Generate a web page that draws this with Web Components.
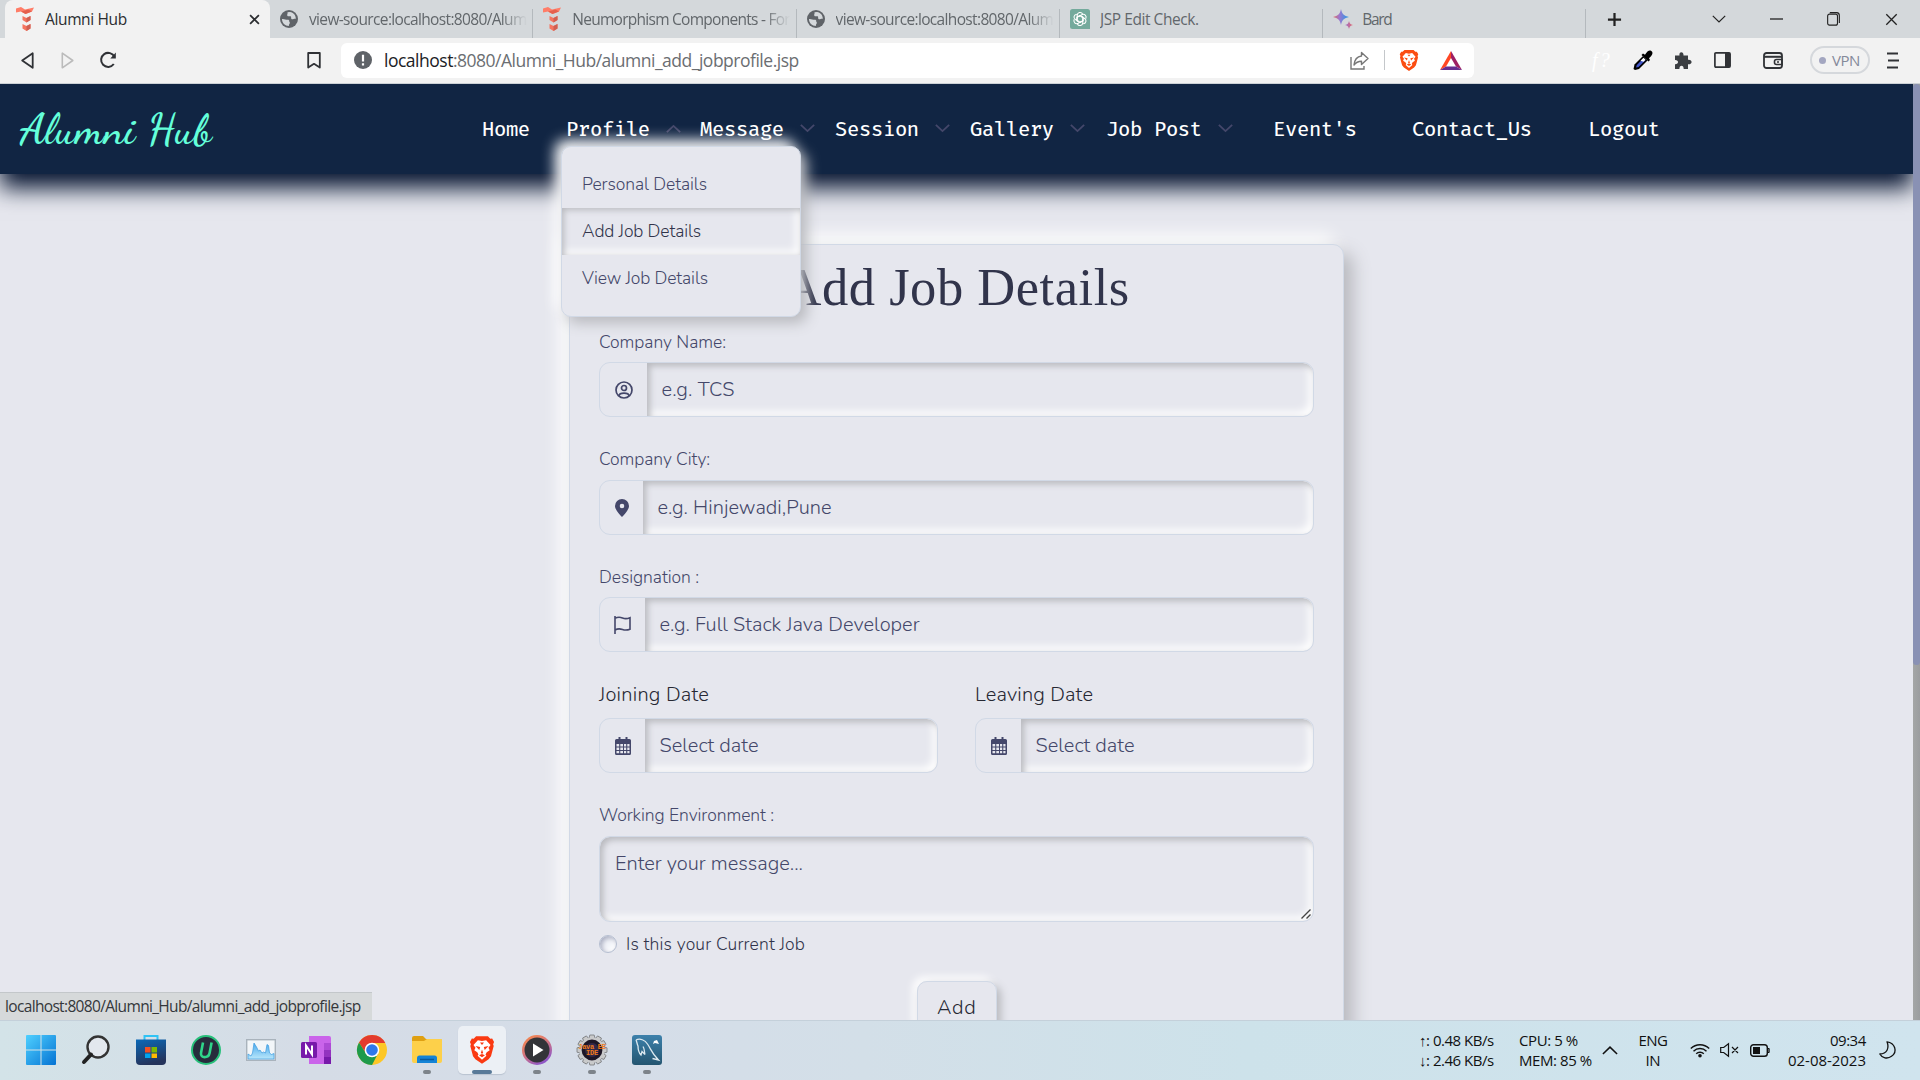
<!DOCTYPE html>
<html lang="en"><head><meta charset="utf-8"><title>Alumni Hub</title>
<style>html,body{margin:0;height:100%;overflow:hidden;background:#e6e7ee}</style></head>
<body><desktop-screen></desktop-screen>
<script>
const define=(name,css,html,init)=>{
  const t=document.createElement('template');
  customElements.define(name,class extends HTMLElement{
    connectedCallback(){
      if(this.shadowRoot)return;
      t.innerHTML='<style>*{box-sizing:border-box}'+css+'</style>'+(typeof html==='function'?html(this):html);
      this.attachShadow({mode:'open'}).append(t.content.cloneNode(true));
      if(init)init(this);
    }
  });
};

/* Single line of text spread to the width given in "w". */
define('fit-text',':host{display:inline-block;white-space:pre;flex:none}','<slot></slot>',el=>{
  const w=+el.getAttribute('w');if(!w)return;
  const n=el.textContent.length,nat=el.getBoundingClientRect().width;
  if(nat)el.style.letterSpacing=((w-nat)/(n-0.5)).toFixed(3)+'px';
  el.style.width=w+'px';
});

const lion='<path d="M7 1h10l2 2.2 1.6-.2L22.200 6l-.8 2 .5 1.500-2.300 9-2 2.500L12 25l-5.600-4-2-2.500-2.300-9L2.600 8l-.8-2L3.400 3 5 3.200z" fill="BG"/><path d="M8.500 4.500 12 5.300l3.500-.8 3.700 4.200-1.700 2.300 1 2.200-2.500 1.800-1 1.800.7 1.200L12 21.500 8.300 18l.7-1.200-1-1.800-2.500-1.800 1-2.200-1.700-2.300z" fill="#fff"/><path d="M6.500 9.500l4 1-.8 2.500zM17.500 9.500l-4 1 .8 2.500zM12 12.500l1 3-1 .8-1-.8zM9.500 17.500l2.500-1 2.500 1-2.500 1.700z" fill="BG"/><path d="M10.300 6.600h3.400l-1.700 2z" fill="BG"/>';
const S='fill="none" stroke="currentColor"';
const knot='<path d="M7.200 9.800V6.300a2.900 2.900 0 0 1 5.400-1.400M7.200 8.300l3-1.700 3 1.700" transform="rotate(A 10 10)"/>';
const teeth=Array.from({length:12},(_,i)=>`<path d="M12.800 0h4.400l.8 4h-6z" transform="rotate(${i*30} 15 15)"/>`).join('');
const icons={
 neu:['0 0 18 24','<path d="M0 1.500 5 0l4 2.500L18 .5l-2 4L9.500 7 5 4.500 0 5.500z" fill="#ff7d68"/><path d="M5 4.500 9.500 7l6.500-2.500-3.500-2z" fill="#e5604e"/><path d="M6.500 9l4 2 4-2v4l-4 2.500-4-2.500z" fill="#f57560"/><path d="M10.500 11l4-2v4l-4 2.500z" fill="#cf5f52"/><path d="M6.500 17l4 2 4-2v4.500L10.500 24l-4-2.500z" fill="#f57560"/><path d="M10.500 19l4-2v4.500L10.500 24z" fill="#cf5f52"/>'],
 globe:['0 0 18 18','<circle cx="9" cy="9" r="9" fill="#5f6368"/><path d="M2 9c2-.5 4 1 6.500.7 1.500.8 0 2.300 1.500 3-.6 1.500-1.500 2-1 3.300C5 16 2 13 2 9zM7.500 2.200C8 4 6.500 4.500 7.500 6c1 .8 2.500-.3 3.500.5.5 1-.5 2 .8 2.700 1.300.3 2.200-.7 4-.4C16 5.500 13.500 2.500 10 2z" fill="#d4d8db"/>'],
 gpt:['0 0 20 20','<path d="M2.500 0h15Q20 0 20 2.500V20H2.500Q0 20 0 17.500v-15Q0 0 2.500 0z" fill="#74aa9c"/><g fill="none" stroke="#fff" stroke-width="1.100">'+[0,60,120,180,240,300].map(a=>knot.replace('A',a)).join('')+'</g>'],
 bard:['0 0 20 20','<defs><linearGradient id="b" x1="0" x2="1"><stop offset="0" stop-color="#e4685f"/><stop offset=".4" stop-color="#9a78d0"/><stop offset="1" stop-color="#1f9be8"/></linearGradient><linearGradient id="c"><stop offset="0" stop-color="#9a70d0"/><stop offset="1" stop-color="#e66a6a"/></linearGradient></defs><path d="M8 0c1 5 3 7 8 8-5 1-7 3-8 8-1-5-3-7-8-8 5-1 7-3 8-8z" fill="url(#b)"/><path d="M16 12c.5 2.500 1.500 3.500 4 4-2.500.5-3.500 1.500-4 4-.5-2.500-1.500-3.500-4-4 2.500-.5 3.500-1.500 4-4z" fill="url(#c)"/>'],
 x:['0 0 12 12','<path d="M1.200 1.200l9.600 9.600M10.800 1.200L1.200 10.800" '+S+' stroke-width="var(--sw,1.900)"/>'],
 plus:['0 0 16 16','<path d="M8 1v14M1 8h14" '+S+' stroke-width="2.400"/>'],
 chev:['0 0 14 8','<path d="M.8.8L7 7 13.200.8" '+S+' stroke-width="var(--sw,1.200)"/>'],
 chevup:['0 0 14 8','<path d="M.8 7.200L7 1l6.200 6.200" '+S+' stroke-width="var(--sw,1.200)"/>'],
 min:['0 0 14 14','<path d="M0 7h14" '+S+' stroke-width="1.300"/>'],
 max:['0 0 14 14','<rect x=".7" y="2.200" width="10.600" height="11" rx="2" '+S+' stroke-width="1.200"/><path d="M3 .7h7.500a3 3 0 0 1 2.800 3V11" '+S+' stroke-width="1.200"/>'],
 back:['0 0 13 17','<path d="M11.700 1.200v14.600L1.200 8.500z" '+S+' stroke-width="1.800" stroke-linejoin="round"/>'],
 fwd:['0 0 13 17','<path d="M1.300 1.200v14.600l10.500-7.300z" '+S+' stroke-width="1.600" stroke-linejoin="round"/>'],
 reload:['0 0 18 18','<path d="M14.800 13A7 7 0 1 1 15.500 6" '+S+' stroke-width="2"/><path d="M16.800 1.500v6h-5.500z" fill="currentColor"/>'],
 mark:['0 0 14 17','<path d="M1.200 1h11.600v14.500L7 11.800l-5.800 3.700z" '+S+' stroke-width="1.800" stroke-linejoin="round"/>'],
 info:['0 0 18 18','<circle cx="9" cy="9" r="9" fill="#5f6368"/><path d="M9 3.800v6.700M9 12.200v2.200" stroke="#fff" stroke-width="2.200"/>'],
 share:['0 0 19 19','<path d="M1 6v12h13v-3" '+S+' stroke-width="1.400"/><path d="M11.500 1.500l6.500 6-6.500 6v-3.300c-3.500 0-5.500 1-7.500 3.800.5-5 3.500-8.500 7.500-9z" '+S+' stroke-width="1.400" stroke-linejoin="round"/>'],
 lion:['1 0 22 26',lion.replaceAll('BG','#fb4d12')],
 redlion:['1 0 22 26',lion.replaceAll('BG','#fa3a12')],
 bat:['0 0 22 19','<path d="M11 0 0 19l6-3.500 5-8.500z" fill="#ff4724"/><path d="M11 0l11 19-6-3.500L11 7z" fill="#9e1f63"/><path d="M0 19h22l-6-3.500H6z" fill="#662d91"/>'],
 dropper:['0 0 20 21','<path d="M2 20l-1.500-1 1-4.500L10 6l4.500 4.500-8.500 8.500z" fill="#000"/><path d="M3 17.500l.8-2.500L10.500 8.300l2 2L5.500 17z" fill="#4356c8"/><path d="M7.500 10.800l3-3 2 2-2 2z" fill="#fff"/><path d="M8.500 5L10 3.500l2 1.300C14 1.500 16 0 18 .8c2 1 2 3.200 0 5.400l-2 2 1 1.700-1.500 1.500z" fill="#000"/>'],
 puzzle:['0 0 18 18','<path d="M1 4.500h4.500C4.500 0 10 0 9.500 4.500H14v4.200c4.800-.6 4.800 5.100 0 4.500V18H9.700c.3-4.500-4.600-4.500-4.300 0H1v-4.700c4 .2 4-4.400 0-4.200z" fill="#3b3e42"/>'],
 side:['0 0 17 16','<rect x=".9" y=".9" width="15.200" height="14.200" rx="1" '+S+' stroke-width="1.700"/><path d="M11 1h5v14h-5z" fill="currentColor"/>'],
 wallet:['0 0 20 17','<rect x="1" y="1" width="18" height="15" rx="2.500" '+S+' stroke-width="1.800"/><path d="M1 4.800h18" '+S+' stroke-width="2"/><path d="M19 7.500h-5.500a2 2 0 0 0-2 2v1a2 2 0 0 0 2 2H19z" '+S+' stroke-width="1.600"/><circle cx="15" cy="10" r="1" fill="currentColor"/>'],
 menu:['0 0 12 17','<path d="M0 1.500h11M1 8.500h11M0 15.500h11" '+S+' stroke-width="2"/>'],
 user:['0 0 18 18','<circle cx="9" cy="9" r="8" '+S+' stroke-width="1.700"/><circle cx="9" cy="7" r="2.500" '+S+' stroke-width="1.700"/><path d="M3.800 15c.4-2 2-2.800 5.200-2.800s4.800.8 5.200 2.800" '+S+' stroke-width="1.700"/>'],
 pin:['0 0 14 18','<path fill-rule="evenodd" d="M7 0a7 7 0 0 1 7 7c0 3.500-4.500 8.500-7 11C4.500 15.500 0 10.500 0 7a7 7 0 0 1 7-7zm0 4.700a2.300 2.300 0 1 0 0 4.600 2.300 2.300 0 0 0 0-4.600z" fill="currentColor"/>'],
 flag:['0 0 17 18','<path d="M1 0v18M1 2.400C3.500 1 5.500.8 8.500 2c2.800 1.100 4.500 1 7.500-.3v11.500c-3 1.200-4.700 1.300-7.500.3-3-1.100-5-.9-7.500.5" '+S+' stroke-width="1.600"/>'],
 cal:['0 0 16 18','<path d="M3.500 0h2v2h5V0h2v2H14.500q1.500 0 1.500 1.500v13q0 1.500-1.500 1.500h-13Q0 18 0 16.500v-13Q0 2 1.500 2h2z" fill="currentColor"/><path d="M1.500 7h2.700v2.400H1.500zM5.300 7H8v2.400H5.300zM9 7h2.200v2.400H9zM12.300 7h2.200v2.400h-2.200zM1.500 10.500h2.700v2.400H1.500zM5.300 10.500H8v2.400H5.300zM9 10.500h2.200v2.400H9zM12.300 10.500h2.200v2.400h-2.200zM1.500 14h2.700v2.300H1.500zM5.300 14H8v2.300H5.300zM9 14h2.200v2.300H9zM12.300 14h2.200v2.300h-2.200z" fill="#e6e7ee"/>'],
 grip:['0 0 10 10','<path d="M.5 9.500l9-9M5.500 9.500l4-4" stroke="#444" stroke-width="1.400"/>'],
 win:['0 0 30 30','<defs><linearGradient id="w" x2="1" y2="1"><stop offset="0" stop-color="#4fd0ff"/><stop offset="1" stop-color="#0573d3"/></linearGradient></defs><path d="M0 1q0-1 1-1h13.500v14.500H0zM15.500 0H29q1 0 1 1v13.500H15.500zM0 15.500h14.500V30H1q-1 0-1-1zM15.500 15.500H30V29q0 1-1 1H15.500z" fill="url(#w)"/>'],
 search:['0 0 28 30','<circle cx="16" cy="12" r="10.500" fill="#e3e8ee" stroke="#333" stroke-width="2.400"/><path d="M9 19.500L2 27" stroke="#222" stroke-width="4" stroke-linecap="round"/>'],
 store:['0 0 30 30','<defs><linearGradient id="s" x2=".3" y2="1"><stop offset="0" stop-color="#0a69b8"/><stop offset="1" stop-color="#25345c"/></linearGradient></defs><path d="M8.500 6V1h13v5" fill="none" stroke="#2fc3f5" stroke-width="2"/><path d="M0 4.500h30V26q0 4-4 4H4q-4 0-4-4z" fill="url(#s)"/><path d="M9 12h5.500v5.500H9z" fill="#f25022"/><path d="M15.500 12H21v5.500h-5.500z" fill="#7fba00"/><path d="M9 18.500h5.500V23H9z" fill="#00a4ef"/><path d="M15.500 18.500H21V23h-5.500z" fill="#ffb900"/>'],
 iu:['0 0 30 30','<circle cx="15" cy="15" r="14" fill="#272c3c" stroke="#27c07a" stroke-width="2"/><path d="M12 7.500l-2 10.500c-.8 5.500 7.500 5.500 8.600 0l2-10.500" fill="none" stroke="#2fd58a" stroke-width="2.600"/>'],
 graph:['0 0 30 22','<defs><linearGradient id="g" y2="1" x2="0"><stop offset="0" stop-color="#49a9ec"/><stop offset="1" stop-color="#b9e7fb"/></linearGradient></defs><rect x=".7" y=".7" width="28.600" height="20.600" fill="#f2f6f9" stroke="#a9b3bc" stroke-width="1.400"/><path d="M2 15l3 2 1.500-3L8 4l2.500 4 2 4 1.500-1 2 3 1.500-1 2 1L21 5.500l1.500 1 1 7.500 2 1.500 2.500-1V20H2z" fill="url(#g)" stroke="#3c9be0" stroke-width=".7"/>'],
 note:['0 0 30 28','<path d="M8 0h20q2 0 2 2v24q0 2-2 2H8z" fill="#ca64ea"/><path d="M23 7h7v7h-7z" fill="#ae4bd5"/><path d="M23 14h7v7h-7z" fill="#9332bf"/><path d="M23 21h7v7h-7z" fill="#7719aa"/><rect y="6" width="16" height="16" rx="1.500" fill="#7719aa"/><path d="M5 18.500v-9l6 9v-9" fill="none" stroke="#fff" stroke-width="2"/>'],
 chrome:['0 0 30 30','<circle cx="15" cy="15" r="15" fill="#fdc726"/><path d="M15 8H28.300A15 15 0 0 0 2 7.500L9 18.500z" fill="#e33b2e"/><path d="M2 7.500A15 15 0 0 0 15 30l6-11.500-6 3.500-6-3.500z" fill="#1e9a4b"/><circle cx="15" cy="15" r="7.300" fill="#fff"/><circle cx="15" cy="15" r="5.800" fill="#2f78ea"/>'],
 folder:['0 0 30 28','<path d="M0 2q0-2 2-2h9l3 3h14q2 0 2 2v6H0z" fill="#dfa012"/><path d="M0 5h12l3-2h14q1 0 1 1v21q0 2-2 2H2q-2 0-2-2z" fill="#fdd04a"/><path d="M5 27v-5q0-2.500 2.500-2.500h15Q25 19.500 25 22v5z" fill="#1483d6"/><path d="M8 23.500h14" stroke="#0a5a9c" stroke-width="1.500"/>'],
 player:['0 0 30 30','<defs><linearGradient id="m" x2=".6" y2="1"><stop offset="0" stop-color="#fb8b45"/><stop offset=".5" stop-color="#d8777a"/><stop offset="1" stop-color="#8d56c9"/></linearGradient></defs><circle cx="15" cy="15" r="15" fill="url(#m)"/><circle cx="15" cy="15" r="12.500" fill="#333438"/><path d="M11 8.500l10.500 6.500L11 21.500z" fill="#fff"/>'],
 gear:['0 0 30 30','<g fill="#c9cacb" stroke="#77797c" stroke-width=".8">'+teeth+'</g><circle cx="15" cy="15" r="11.500" fill="#1d1626" stroke="#c9cacb" stroke-width="2.200"/><circle cx="15" cy="15" r="7" fill="#322848"/>'],
 sql:['0 0 30 30','<defs><linearGradient id="q" y2="1" x2="0"><stop offset="0" stop-color="#3d81ab"/><stop offset="1" stop-color="#245570"/></linearGradient></defs><rect width="30" height="30" rx="3" fill="url(#q)"/><path d="M4 5c4-2 9 0 11.500 4 3.500 5 4 9 11 16l-6-1.500M4 5c1 2 1 4 2 6 0 4 1 7 3 9l1-3.500 3 3c-1-3 0-5-2-8" fill="none" stroke="#dce9f0" stroke-width="1.300"/><path d="M20 3l2 3 3-1 2 4-4-1-2 1 1-3z" fill="#fff"/>'],
 wifi:['0 0 20 16','<path d="M.8 6.500a13 13 0 0 1 18.400 0M3.500 9.200a9.200 9.200 0 0 1 13 0M6.200 11.700a5.500 5.500 0 0 1 7.600 0" '+S+' stroke-width="1.400"/><circle cx="10" cy="13.800" r="1.800" fill="currentColor"/>'],
 mute:['0 0 19 14','<path d="M.7 4.500h3L8.500.8v12.400L3.700 9.500h-3zM12 4l6 6M18 4l-6 6" '+S+' stroke-width="1.200"/>'],
 batt:['0 0 20 13','<rect x=".7" y=".7" width="16.600" height="11.600" rx="2.800" '+S+' stroke-width="1.400"/><path d="M3 3h7v7H3z" fill="currentColor"/><path d="M18 4.500h1.200v4H18z" '+S+'/>'],
 moon:['0 0 17 18','<path d="M8 .8c8 1 11 10 4.500 14.500-4 3-9.500 1.800-11.700-2.300C8 13 10.500 7 8 .8z" '+S+' stroke-width="1.300" stroke-linejoin="round"/>']
};
define('ui-icon',':host{display:inline-flex;flex:none}svg{display:block;overflow:visible}',el=>{
  const [vb,body]=icons[el.getAttribute('name')],p=vb.split(' ');
  return `<svg viewBox="${vb}" width="${el.getAttribute('w')||p[2]}" height="${el.getAttribute('h')||p[3]}" preserveAspectRatio="none">${body}</svg>`;
});

define('browser-tab',`:host{display:flex;align-items:center;flex:none;width:263.300px;height:38px;padding-left:10px;box-sizing:border-box;font:15.500px "Open Sans",sans-serif;color:#62676b}
 .sep{width:1px;height:29px;margin-top:9px;background:#b4b9bd;margin-left:auto}
 :host([active]){background:#f2f2f2;width:265px;border-radius:8px 8px 0 0;padding-left:11px;color:#2b2d30}
 .t{margin-left:var(--tg,11px);overflow:hidden}.fade{-webkit-mask:linear-gradient(90deg,#000 88%,transparent);mask:linear-gradient(90deg,#000 88%,transparent)}
 .c{margin-left:auto;margin-right:10px}`,
 el=>`<ui-icon name="${el.getAttribute('icon')}" w="${el.getAttribute('iw')||18}" h="${el.getAttribute('ih')||18}"></ui-icon><fit-text class="t ${el.hasAttribute('fade')?'fade':''}" w="${el.getAttribute('tw')}">${el.getAttribute('label')}</fit-text>${el.hasAttribute('active')?'<ui-icon class="c" name="x" w="11" h="11"></ui-icon>':'<span class="sep"></span>'}`);

define('tab-strip',`:host{display:flex;height:38px;background:#d4d8db;padding-left:5px;align-items:center;color:#222}
 .p{margin-left:21px}.a{margin-left:90px}.b{margin-left:44px}.c{margin-left:44px}.d{margin-left:45px;--sw:1.200}`,
 `<browser-tab active icon="neu" ih="24" label="Alumni Hub" tw="82"></browser-tab><browser-tab icon="globe" fade label="view-source:localhost:8080/Alum" tw="218"></browser-tab><browser-tab icon="neu" ih="24" fade label="Neumorphism Components - For" tw="218"></browser-tab><browser-tab icon="globe" fade label="view-source:localhost:8080/Alum" tw="218"></browser-tab><browser-tab style="--tg:10px" icon="gpt" iw="20" ih="20" label="JSP Edit Check." tw="99"></browser-tab><browser-tab style="--tg:9px" icon="bard" iw="20" ih="20" label="Bard" tw="30"></browser-tab>
 <ui-icon class="p" name="plus" w="15" h="15"></ui-icon><ui-icon class="a" name="chev" w="14" h="8"></ui-icon><ui-icon class="b" name="min" w="13"></ui-icon><ui-icon class="c" name="max" w="13"></ui-icon><ui-icon class="d" name="x" w="13" h="13"></ui-icon>`);

define('address-bar',`:host{display:flex;align-items:center;box-sizing:border-box;width:1133px;height:35px;background:#fff;border-radius:6px;padding-left:13px;color:#777}
 .u{margin-left:12px;font:17.500px "Open Sans",sans-serif;color:#6b6e72}.u b{font-weight:400;color:#202124}.s{margin-left:auto}i{width:1px;height:20px;background:#c4c7ca;margin:0 14px 0 15px}`,
 `<ui-icon name="info"></ui-icon><fit-text class="u" w="415"><b>localhost</b>:8080/Alumni_Hub/alumni_add_jobprofile.jsp</fit-text><ui-icon class="s" name="share"></ui-icon><i></i><ui-icon name="lion" w="20" h="23"></ui-icon><ui-icon style="margin:0 12px 0 21px" name="bat"></ui-icon>`);

define('tool-bar',`:host{display:flex;align-items:center;box-sizing:border-box;height:46px;background:#f2f2f2;border-bottom:1px solid #ccd1d6;color:#303236;padding:0 0 1px 21px}
 .f{color:#bbb;margin-left:27px}.r{margin-left:25px}.k{margin-left:190px}address-bar{margin-left:20px}
 .q{margin-left:118px;font:italic 20px "Liberation Serif",serif;color:#fff}
 .v{display:flex;align-items:center;gap:6px;border:2px solid #d5d8dc;border-radius:15px;width:60px;height:28px;margin-left:27px;padding-left:7px;color:#84899a;font:15px "Open Sans",sans-serif}.v i{width:7px;height:7px;border-radius:50%;background:#a3a6c0}`,
 `<ui-icon name="back"></ui-icon><ui-icon class="f" name="fwd"></ui-icon><ui-icon class="r" name="reload"></ui-icon><ui-icon class="k" name="mark"></ui-icon><address-bar></address-bar>
 <fit-text class="q" w="19">f?</fit-text><ui-icon style="margin-left:22px" name="dropper"></ui-icon><ui-icon style="margin-left:21px" name="puzzle"></ui-icon><ui-icon style="margin-left:22px" name="side"></ui-icon><ui-icon style="margin-left:32px" name="wallet"></ui-icon><div class="v"><i></i><fit-text w="28">VPN</fit-text></div><ui-icon style="margin-left:17px" name="menu"></ui-icon>`);

define('nav-item',`:host{display:flex;align-items:center;flex:none;padding-top:2px;font:450 20px "Fira Code","DejaVu Sans Mono",monospace;color:#fff}
 ui-icon{color:#44476a;margin:0 0 5px 16px;--sw:1.700}`,
 el=>`<fit-text w="${el.getAttribute('w')}">${el.getAttribute('t')}</fit-text>${el.hasAttribute('menu')?`<ui-icon name="${el.getAttribute('menu')||'chev'}" w="15" h="8" ${el.getAttribute('menu')?'style="margin-bottom:2px"':''}></ui-icon>`:''}`);

define('menu-item',`:host{display:flex;align-items:center;height:47px;padding:0 0 2px 20px;color:#44476a;font:360 17.500px Nunito,"Open Sans",sans-serif}
 :host([on]){color:#31344b;box-shadow:inset 2px 2px 6px #b8b9be,inset -4px -4px 8px #fff}`,
 el=>`<fit-text w="${el.getAttribute('w')}">${el.getAttribute('t')}</fit-text>`);

define('drop-menu',`:host{display:block;box-sizing:border-box;position:absolute;left:561px;top:62px;width:240px;height:171px;padding:14px 0;background:#e6e7ee;border:1px solid #d1d9e6;border-radius:10px;box-shadow:6px 6px 14px #b8b9be,-6px -6px 14px #fff;z-index:3}`,
 `<menu-item t="Personal Details" w="125"></menu-item><menu-item on t="Add Job Details" w="119"></menu-item><menu-item t="View Job Details" w="126"></menu-item>`);

define('site-nav',`:host{display:flex;flex:none;align-items:center;box-sizing:border-box;position:relative;z-index:2;width:1913px;height:90px;background:#112543;box-shadow:0 14px 22px #061430;padding-left:20px}
 .logo{font:600 43px/60px "Dancing Script","Liberation Serif",cursive;color:#64ffda}`,
 `<fit-text class="logo" w="192">Alumni Hub</fit-text>
 <nav-item style="margin-left:270px" t="Home" w="48"></nav-item><nav-item style="margin-left:36px" t="Profile" w="84" menu="chevup"></nav-item><nav-item style="margin-left:19px" t="Message" w="84" menu></nav-item><nav-item style="margin-left:20px" t="Session" w="84" menu></nav-item><nav-item style="margin-left:20px" t="Gallery" w="84" menu></nav-item><nav-item style="margin-left:21px" t="Job Post" w="96" menu></nav-item><nav-item style="margin-left:40px" t="Event's" w="84"></nav-item><nav-item style="margin-left:55px" t="Contact_Us" w="120"></nav-item><nav-item style="margin-left:56px" t="Logout" w="72"></nav-item>
 <drop-menu></drop-menu>`);

define('field-label',`:host{display:flex;align-items:center;height:24px;color:#44476a;font:300 17.500px Nunito,"Open Sans",sans-serif}:host([big]){font-size:20px;color:#262833}`,
 el=>`<fit-text w="${el.getAttribute('w')}">${el.getAttribute('t')}</fit-text>`);

define('form-input',`:host{display:flex;box-sizing:border-box;height:55px;border:1px solid #d1d9e6;border-radius:11px;overflow:hidden;color:#44476a}
 .a{display:flex;align-items:center;justify-content:center;width:var(--aw,45px)}
 .i{flex:1;display:flex;align-items:center;padding-left:14.500px;border-radius:0 10px 10px 0;box-shadow:inset 3px 3px 6px #b8b9be,inset -4px -4px 9px #fff;font:300 20px Nunito,"Open Sans",sans-serif}`,
 el=>`<div class="a"><ui-icon name="${el.getAttribute('icon')}"></ui-icon></div><div class="i"><fit-text w="${el.getAttribute('w')}">${el.getAttribute('t')}</fit-text></div>`);

define('message-box',`:host{display:flex;box-sizing:border-box;align-items:flex-start;justify-content:space-between;height:86px;padding:13px 2px 2px 15px;border:1px solid #d1d9e6;border-radius:11px;box-shadow:inset 3px 3px 6px #b8b9be,inset -4px -4px 9px #fff;color:#44476a;font:300 20px Nunito,"Open Sans",sans-serif}ui-icon{align-self:flex-end}`,
 `<fit-text w="188">Enter your message...</fit-text><ui-icon name="grip"></ui-icon>`);

define('job-card',`:host{display:flex;box-sizing:border-box;flex-direction:column;width:775px;height:900px;margin:70px 0 0 569px;padding:0 29px;border:1px solid #d1d9e6;border-radius:11px;background:#e6e7ee;box-shadow:9px 9px 18px #b8b9be,-9px -9px 18px #fff;flex:none}
 h1{margin:11px 0 0;height:64px;text-align:center;font:400 52.500px/63px "Liberation Serif",serif;color:#31344b}
 .d{display:flex;gap:37px;margin-top:19px}.d>div{width:339px}.d field-label{height:24px;margin-bottom:12px}
 .r{display:flex;align-items:center;gap:9px;margin-top:11px;height:22px;color:#31344b;font:360 17.500px Nunito,"Open Sans",sans-serif}
 .r i{width:18px;height:18px;border-radius:50%;border:1px solid #b5bed0;background:#f2f4f9;box-shadow:inset 2px 2px 5px #a9adc0,inset -2px -2px 4px #fff}
 .b{align-self:center;display:flex;justify-content:center;width:80px;height:55px;margin-top:26px;padding-top:12px;border:1px solid #d1d9e6;border-radius:10px;box-shadow:4px 4px 8px #b8b9be,-4px -4px 8px #fff;color:#262833;font:350 20px Nunito,"Open Sans",sans-serif}`,
 `<h1><fit-text w="346">Add Job Details</fit-text></h1>
 <field-label style="margin-top:10px" t="Company Name:" w="127"></field-label><form-input style="margin-top:8px;--aw:47px" icon="user" t="e.g. TCS" w="73"></form-input>
 <field-label style="margin-top:30px" t="Company City:" w="111"></field-label><form-input style="margin-top:9px;--aw:43px" icon="pin" t="e.g. Hinjewadi,Pune" w="174"></form-input>
 <field-label style="margin-top:30px" t="Designation :" w="100"></field-label><form-input style="margin-top:8px" icon="flag" t="e.g. Full Stack Java Developer" w="260"></form-input>
 <div class="d" style="margin-top:30px"><div><field-label big t="Joining Date" w="110"></field-label><form-input icon="cal" t="Select date" w="99"></form-input></div><div><field-label big t="Leaving Date" w="118"></field-label><form-input icon="cal" t="Select date" w="99"></form-input></div></div>
 <field-label style="margin-top:30px" t="Working Environment :" w="175"></field-label><message-box style="margin-top:9px"></message-box>
 <div class="r"><i></i><fit-text w="179">Is this your Current Job</fit-text></div>
 <div class="b"><fit-text w="39">Add</fit-text></div>`);

define('web-page',`:host{display:flex;height:936px;overflow:hidden;position:relative;background:#e6e7ee}
 main{width:1913px;height:936px;display:flex;flex-direction:column}aside{width:7px;background:linear-gradient(90deg,#a4a6a6,#9b9d9f);position:relative;z-index:3}aside i{display:block;height:581px;border-radius:4px;background:#8991b4}
 footer{position:absolute;left:0;bottom:0;width:372px;height:28px;background:#d6d9da;border-top:1px solid #c3c7ca;padding:2px 0 0 5px;color:#34373b;font:15.500px/22px "Open Sans",sans-serif;z-index:4}`,
 `<main><site-nav></site-nav><job-card></job-card></main><aside><i></i></aside><footer><fit-text w="356">localhost:8080/Alumni_Hub/alumni_add_jobprofile.jsp</fit-text></footer>`);

define('task-app',`:host{display:flex;flex:none;align-items:center;justify-content:center;width:48px;height:48px;border-radius:5px;position:relative}
 :host([on]){background:#ecf0f5;box-shadow:0 1px 1px #b9c3d0}:host([run])::after{content:"";position:absolute;bottom:0;width:8px;height:4px;border-radius:2px;background:#7d838a}:host([on])::after{width:20px!important;background:#587998!important}
 b{position:absolute;font:700 7px/6px "Liberation Mono",monospace;letter-spacing:-.3px;color:#f07a1c;text-align:center;white-space:nowrap}`,
 el=>`<ui-icon name="${el.getAttribute('icon')}" ${el.hasAttribute('w')?`w="${el.getAttribute('w')}" h="${el.getAttribute('h')}"`:''}></ui-icon>${el.getAttribute('icon')==='gear'?'<b>Java EE<br>IDE</b>':''}`);

define('task-bar',`:host{display:flex;align-items:center;box-sizing:border-box;height:60px;padding:0 24px 1px 17px;border-top:1px solid #c4d0da;background:linear-gradient(90deg,#d3e3e8,#d5dce6 16%,#d5dde8 32%,#d3dfe8 45%,#cde2ea 65%,#d0e4ee);color:#111;font:15px/20px "Open Sans",sans-serif}
 .apps{display:flex;gap:7.100px;flex:1}.col{display:flex;flex-direction:column;align-items:flex-start;padding-bottom:1px}.c{align-items:center}.e{align-items:flex-end}`,
 `<div class="apps"><task-app icon="win"></task-app><task-app icon="search"></task-app><task-app icon="store"></task-app><task-app icon="iu"></task-app><task-app icon="graph"></task-app><task-app icon="note"></task-app><task-app icon="chrome"></task-app><task-app run icon="folder"></task-app><task-app on run icon="redlion" w="26" h="30"></task-app><task-app run icon="player"></task-app><task-app run icon="gear"></task-app><task-app run icon="sql"></task-app></div>
 <div class="col" style="width:100px"><fit-text w="75">↑: 0.48 KB/s</fit-text><fit-text w="75">↓: 2.46 KB/s</fit-text></div>
 <div class="col" style="width:83px"><fit-text w="59">CPU: 5 %</fit-text><fit-text w="73">MEM: 85 %</fit-text></div>
 <ui-icon style="--sw:1.300" name="chevup" w="16" h="9"></ui-icon>
 <div class="col c" style="margin-left:20px;width:30px"><fit-text w="29">ENG</fit-text><fit-text w="15">IN</fit-text></div>
 <ui-icon style="margin-left:22px" name="wifi"></ui-icon><ui-icon style="margin-left:10px" name="mute"></ui-icon><ui-icon style="margin-left:11px" name="batt"></ui-icon>
 <div class="col e" style="width:78px;margin-left:18px"><fit-text w="36">09:34</fit-text><fit-text w="78">02-08-2023</fit-text></div><ui-icon style="margin-left:13px" name="moon"></ui-icon>`);

define('desktop-screen',':host{display:block;width:1920px;height:1080px;overflow:hidden}','<tab-strip></tab-strip><tool-bar></tool-bar><web-page></web-page><task-bar></task-bar>');
</script></body></html>
